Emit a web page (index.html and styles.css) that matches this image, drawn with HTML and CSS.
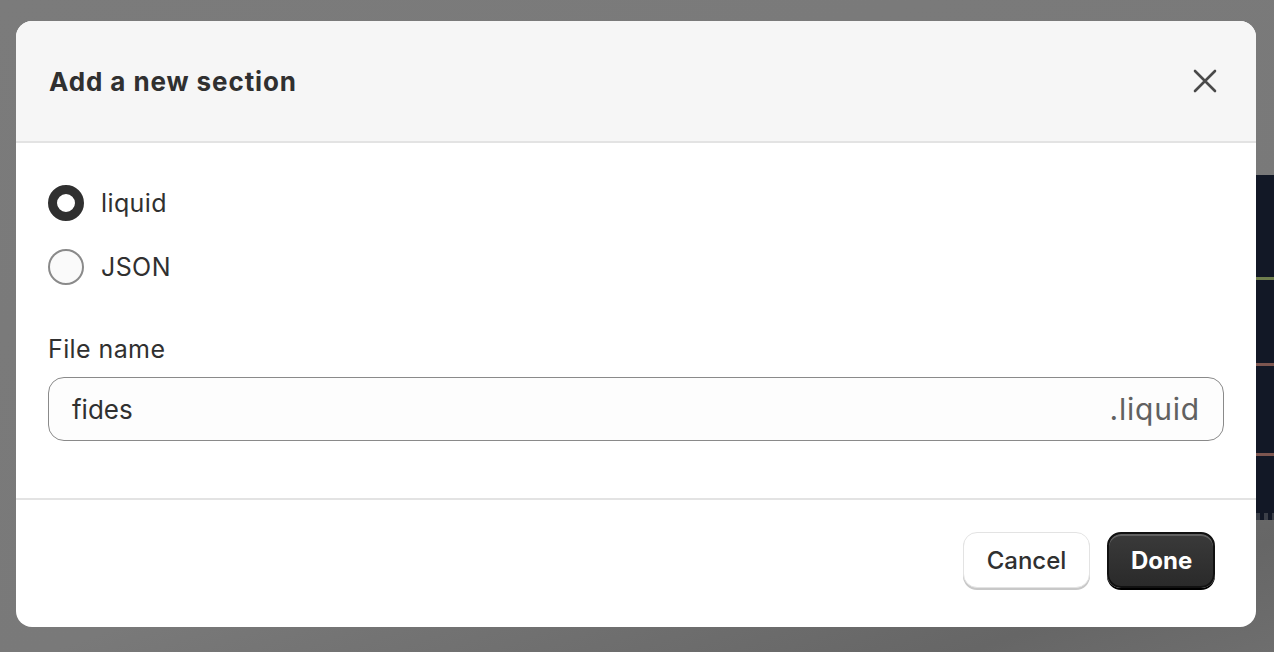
FILE: index.html
```html
<!DOCTYPE html>
<html lang="en">
<head>
  <meta charset="UTF-8">
  <title>Add a new section</title>
  <link rel="stylesheet" href="styles.css">
</head>
<body>

<!-- pannello della pagina sotto l'overlay -->
<div class="page-peek">
  <span class="peek-line green" style="top: 102px;"></span>
  <span class="peek-line red" style="top: 188px;"></span>
  <span class="peek-line red" style="top: 278px;"></span>
  <span class="peek-checker"></span>
</div>

<div class="modal">
  <div class="modal-header">
    <h2 class="modal-title">Add a new section</h2>
    <button class="close-btn" aria-label="Close">
      <svg width="24" height="24" viewBox="0 0 24 24">
        <path d="M2 2 L22 22 M22 2 L2 22" stroke="#4a4a4a" stroke-width="2.6" stroke-linecap="round" fill="none"/>
      </svg>
    </button>
  </div>

  <div class="modal-body">
    <div class="radio-group">
      <label class="radio-row">
        <span class="radio checked"></span>
        <span class="radio-label">liquid</span>
      </label>
      <label class="radio-row">
        <span class="radio"></span>
        <span class="radio-label">JSON</span>
      </label>
    </div>

    <div class="field">
      <div class="field-label">File name</div>
      <div class="text-input">
        <span class="input-value">fides</span>
        <span class="input-suffix">.liquid</span>
      </div>
    </div>
  </div>

  <div class="modal-footer">
    <button class="btn btn-secondary">Cancel</button>
    <button class="btn btn-primary">Done</button>
  </div>
</div>

</body>
</html>
```

FILE: styles.css
```css
body {
  margin: 0;
  height: 652px;
  overflow: hidden;
  background: linear-gradient(160deg, #7b7b7b 0%, #797979 60%, #666 90%, #6e6e6e 100%);
  font-family: Inter, 'Noto Sans', sans-serif;
  color: #303030;
  padding: 21px 18px 25px 16px;
  box-sizing: border-box;
  position: relative;
}

.page-peek {
  position: absolute;
  left: 1256px;
  top: 175px;
  width: 18px;
  height: 345px;
  background: #121826;
}

.peek-line {
  position: absolute;
  left: 0;
  width: 100%;
  height: 3px;
}

.peek-line.green { background: #6f7e4e; }
.peek-line.red { background: #7d5650; }

.peek-checker {
  position: absolute;
  left: 0;
  bottom: 0;
  width: 100%;
  height: 7px;
  background: repeating-linear-gradient(90deg, #3b3f48 0 4px, #121826 4px 8px);
}

.modal {
  position: relative;
  width: 1240px;
  height: 606px;
  background: #fff;
  border-radius: 16px;
  overflow: hidden;
  display: flex;
  flex-direction: column;
}

.modal-header {
  height: 120px;
  flex-shrink: 0;
  background: #f6f6f6;
  border-bottom: 2px solid #e3e3e3;
  display: flex;
  align-items: center;
  justify-content: space-between;
  padding: 0 39px 0 33px;
}

.modal-title {
  margin: 0;
  font-size: 26px;
  font-weight: 680;
  letter-spacing: 0.9px;
}

.close-btn {
  border: none;
  background: none;
  padding: 0;
  width: 24px;
  height: 24px;
  cursor: pointer;
}

.modal-body {
  padding: 42px 32px 57px 32px;
  border-bottom: 2px solid #e3e3e3;
}

.radio-group {
  display: flex;
  flex-direction: column;
  gap: 28px;
}

.radio-row {
  display: flex;
  align-items: center;
  gap: 17px;
  height: 36px;
}

.radio {
  width: 36px;
  height: 36px;
  box-sizing: border-box;
  border-radius: 50%;
  border: 2px solid #8a8a8a;
  background: #fafafa;
}

.radio.checked {
  border: 9px solid #303030;
  background: #fff;
}

.radio-label {
  font-size: 25px;
  letter-spacing: 0.4px;
}

.field {
  margin-top: 48px;
}

.field-label {
  font-size: 25px;
  line-height: 32px;
  letter-spacing: 0.4px;
  margin-bottom: 12px;
}

.text-input {
  height: 64px;
  box-sizing: border-box;
  border: 1.5px solid #8a8a8a;
  border-radius: 16px;
  background: #fdfdfd;
  display: flex;
  align-items: center;
  justify-content: space-between;
  padding: 0 23px;
  font-size: 26px;
}

.input-suffix {
  color: #616161;
  font-size: 30px;
  letter-spacing: 0.8px;
}

.modal-footer {
  display: flex;
  justify-content: flex-end;
  gap: 17px;
  padding: 32px 41px 0;
}

.btn {
  height: 56px;
  border-radius: 14px;
  font-family: Inter, 'Noto Sans', sans-serif;
  font-size: 24px;
  padding: 0 22px;
  cursor: pointer;
}

.btn-secondary {
  background: #fff;
  color: #303030;
  font-weight: 550;
  border: 1.5px solid #e3e3e3;
  box-shadow: 0 2px 0 #c8c8c8;
  width: 127px;
}

.btn-primary {
  background: linear-gradient(#3a3a3a, #2a2a2a);
  color: #fff;
  font-weight: 650;
  border: 2px solid #111;
  box-shadow: inset 0 2px 0 rgba(255, 255, 255, 0.2), 0 2px 0 #000;
  width: 108px;
}
```
